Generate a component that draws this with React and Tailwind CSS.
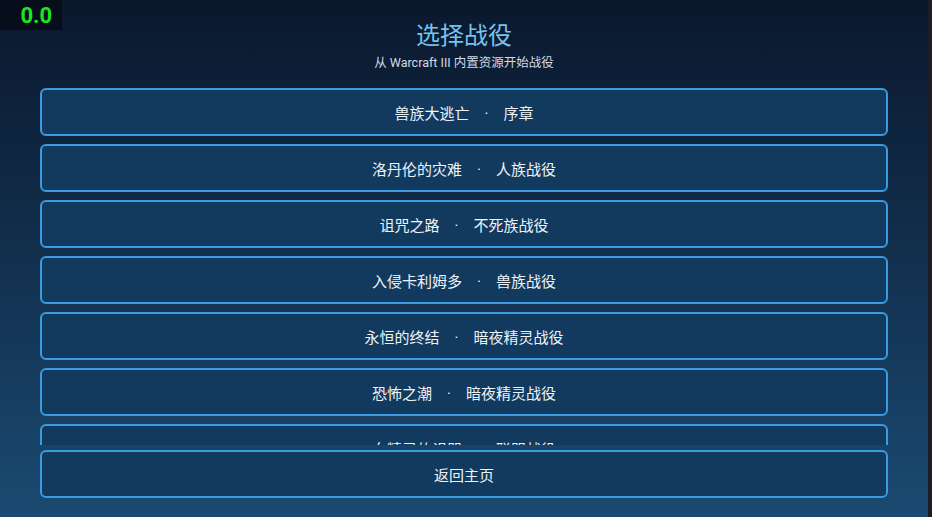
import React from "react";

const items = [
  ["兽族大逃亡", "序章"],
  ["洛丹伦的灾难", "人族战役"],
  ["诅咒之路", "不死族战役"],
  ["入侵卡利姆多", "兽族战役"],
  ["永恒的终结", "暗夜精灵战役"],
  ["恐怖之潮", "暗夜精灵战役"],
  ["血精灵的诅咒", "联盟战役"],
  ["命中注定", "不死族战役"],
];

export default function App() {
  return (
    <div
      className="relative flex h-[517px] w-[932px] overflow-hidden"
      style={{ fontFamily: 'Roboto, "Noto Sans CJK SC", sans-serif' }}
    >
      <div className="flex flex-1 flex-col bg-gradient-to-b from-[#0a182d] to-[#1a4a72] px-[40px]">
        <div className="flex flex-col items-center pt-[19px]">
          <div className="text-[24px] leading-[34px] text-[#76c3ee]">选择战役</div>
          <div className="mt-[1px] text-[12.5px] leading-[18px] text-[#d0dae6]">
            从 Warcraft III 内置资源开始战役
          </div>
        </div>
        <div className="mt-[16px] flex h-[357px] flex-col gap-2 overflow-hidden">
          {items.map(([a, b], i) => (
            <div
              key={i}
              className="flex h-[48px] shrink-0 items-center justify-center rounded-[6px] border-2 border-[#3a9be0] bg-[#123a5f] pt-[4px] text-[15px] text-[#eef3f8]"
            >
              <span>{a}</span>
              <span className="mx-[15px]">·</span>
              <span>{b}</span>
            </div>
          ))}
        </div>
        <div className="mt-[5px] flex h-[48px] items-center justify-center rounded-[6px] border-2 border-[#3a9be0] bg-[#123a5f] pt-[4px] text-[15px] text-[#eef3f8]">
          返回主页
        </div>
      </div>
      <div className="w-[4px] bg-[#1d1e25]" />
      <div className="absolute left-0 top-0 flex h-[30px] w-[62px] items-center justify-end bg-[#050e1a] pr-[10px] text-[22px] font-bold text-[#1ee61e]">
        0.0
      </div>
    </div>
  );
}
